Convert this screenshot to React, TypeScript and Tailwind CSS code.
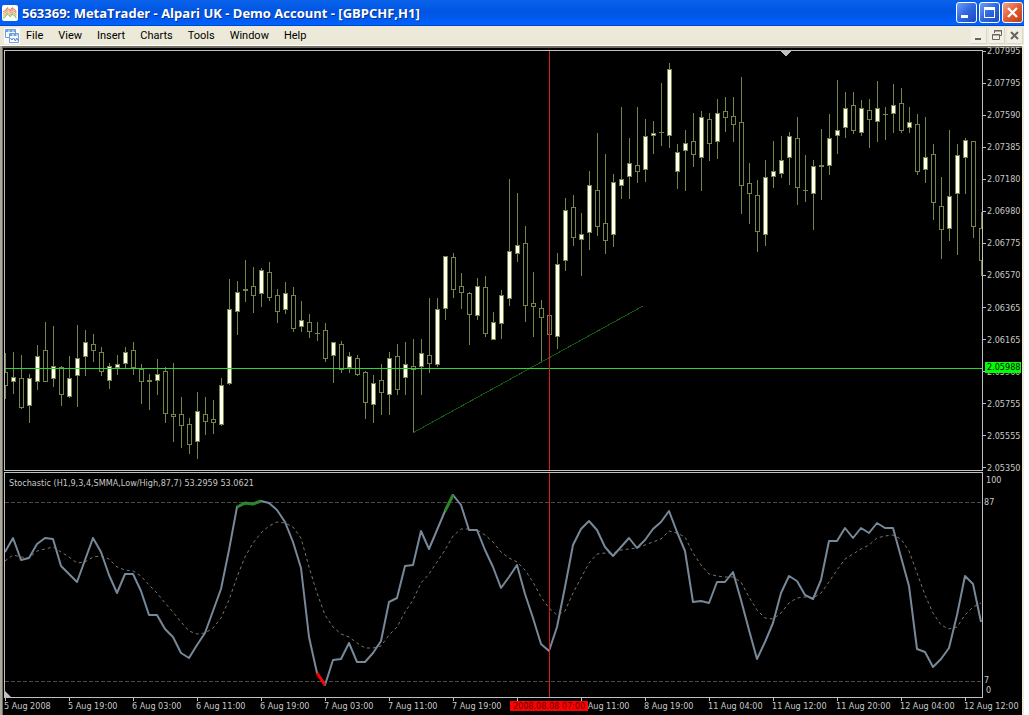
import React, { memo } from 'react';

// [high, low, bodyTop, bodyBottom, isFilled]
type Candle = [number, number, number, number, 0 | 1];

const STEP = 8;
const FIRST_X = 5;

const candles: Candle[] = [
  [353, 398, 372, 385, 0], [352, 393, 377, 381, 1], [355, 408, 378, 407, 0], [374, 422, 378, 405, 1],
  [345, 389, 356, 381, 1], [322, 381, 350, 381, 0], [326, 386, 366, 378, 1], [366, 405, 367, 394, 0],
  [356, 397, 378, 396, 1], [325, 406, 358, 375, 1], [330, 375, 342, 356, 1], [334, 361, 344, 350, 0],
  [347, 375, 352, 371, 0], [363, 388, 366, 380, 1], [355, 374, 364, 367, 1], [347, 367, 352, 363, 1],
  [342, 374, 350, 367, 0], [364, 403, 369, 381, 0], [374, 409, 380, 381, 0], [359, 394, 374, 380, 1],
  [367, 422, 371, 413, 0], [363, 441, 414, 416, 0], [397, 447, 414, 425, 0], [418, 453, 424, 444, 0],
  [392, 458, 411, 441, 1], [397, 434, 414, 421, 0], [400, 433, 419, 422, 0], [378, 425, 385, 424, 1],
  [279, 384, 309, 383, 1], [281, 334, 292, 311, 1], [260, 301, 289, 290, 0], [267, 312, 286, 295, 0],
  [268, 306, 270, 293, 1], [262, 300, 272, 297, 0], [289, 322, 295, 311, 0], [282, 313, 293, 309, 1],
  [287, 331, 295, 328, 0], [301, 331, 320, 326, 1], [314, 337, 322, 331, 0], [322, 340, 333, 333, 0],
  [323, 361, 330, 358, 0], [342, 382, 342, 355, 1], [341, 372, 344, 369, 0], [352, 372, 356, 367, 1],
  [355, 375, 358, 374, 0], [371, 418, 372, 402, 0], [375, 422, 383, 404, 1], [364, 414, 380, 392, 0],
  [352, 414, 358, 394, 1], [344, 394, 356, 389, 0], [342, 394, 364, 377, 1], [339, 432, 366, 369, 0],
  [339, 394, 353, 366, 1], [298, 372, 355, 363, 0], [298, 366, 309, 364, 1], [256, 319, 256, 308, 1],
  [253, 297, 257, 289, 0], [273, 308, 286, 292, 0], [292, 344, 293, 314, 0], [278, 319, 286, 315, 1],
  [276, 336, 287, 333, 0], [312, 339, 322, 339, 1], [290, 338, 295, 323, 1], [179, 305, 251, 298, 1],
  [193, 261, 245, 253, 1], [226, 321, 243, 305, 0], [272, 336, 303, 306, 0], [300, 361, 308, 317, 0],
  [315, 334, 315, 334, 0], [253, 348, 264, 336, 1], [198, 270, 210, 260, 1], [195, 245, 207, 237, 0],
  [213, 275, 234, 239, 1], [171, 249, 185, 232, 1], [133, 235, 190, 226, 0], [154, 253, 223, 240, 0],
  [174, 246, 182, 234, 1], [107, 198, 179, 185, 1], [138, 198, 163, 176, 1], [107, 182, 165, 171, 0],
  [119, 181, 136, 169, 1], [121, 153, 133, 135, 1], [83, 145, 132, 132, 0], [63, 147, 69, 135, 1],
  [144, 188, 152, 171, 1], [130, 190, 143, 150, 1], [113, 166, 141, 154, 0], [111, 190, 117, 157, 1],
  [113, 160, 119, 143, 0], [99, 158, 113, 141, 1], [97, 131, 111, 117, 0], [97, 141, 116, 124, 0],
  [77, 213, 122, 185, 0], [163, 223, 183, 193, 0], [180, 251, 195, 231, 0], [160, 245, 177, 234, 1],
  [141, 187, 171, 176, 1], [136, 177, 160, 173, 1], [132, 184, 136, 157, 1], [117, 204, 138, 187, 0],
  [155, 201, 190, 190, 0], [160, 229, 166, 193, 1], [129, 199, 165, 166, 0], [114, 174, 138, 165, 1],
  [80, 153, 130, 135, 1], [92, 137, 108, 127, 1], [92, 133, 105, 130, 0], [100, 135, 108, 132, 1],
  [99, 147, 110, 119, 0], [81, 141, 108, 121, 1], [107, 139, 114, 114, 0], [84, 132, 105, 113, 1],
  [88, 132, 103, 130, 0], [107, 132, 122, 127, 1], [114, 174, 124, 171, 0], [117, 182, 157, 169, 1],
  [144, 219, 154, 202, 0], [177, 258, 206, 229, 0], [130, 240, 196, 228, 1], [144, 254, 155, 193, 1],
  [138, 193, 140, 157, 1], [141, 237, 141, 226, 0], [212, 275, 228, 260, 0],
];

const stochastic = [
  552, 538, 560, 558, 544, 538, 539, 566, 574, 582, 560, 538, 552, 575, 593, 574, 574, 591, 615, 615,
  629, 637, 653, 658, 645, 633, 611, 589, 550, 507, 503, 504, 501, 503, 510, 522, 542, 568, 637, 673,
  685, 660, 659, 643, 662, 662, 653, 641, 602, 598, 566, 565, 531, 549, 530, 511, 495, 505, 530, 530,
  550, 567, 588, 577, 565, 594, 618, 644, 651, 627, 587, 545, 529, 521, 530, 547, 556, 547, 538, 548,
  540, 529, 522, 511, 532, 551, 602, 601, 603, 582, 582, 572, 600, 630, 659, 642, 623, 593, 576, 581,
  595, 599, 580, 541, 541, 528, 538, 528, 533, 523, 528, 528, 557, 586, 649, 652, 667, 659, 648, 615,
  576, 584, 622,
];

const signal = [
  561, 555, 557, 558, 551, 549, 547, 552, 557, 563, 562, 557, 556, 559, 567, 570, 571, 576, 585, 593,
  603, 612, 622, 631, 634, 633, 628, 618, 600, 577, 557, 543, 533, 526, 522, 523, 527, 538, 567, 593,
  615, 627, 634, 637, 643, 648, 648, 646, 635, 627, 612, 600, 583, 574, 562, 550, 536, 529, 529, 530,
  535, 542, 552, 558, 562, 570, 582, 597, 608, 615, 611, 593, 578, 563, 554, 553, 553, 550, 549, 548,
  545, 542, 539, 531, 533, 537, 553, 565, 574, 576, 577, 577, 582, 597, 610, 618, 619, 613, 603, 598,
  597, 598, 593, 582, 570, 559, 554, 549, 545, 538, 536, 535, 539, 551, 573, 595, 613, 625, 629, 627,
  615, 607, 603,
];

const prices = [
  '2.07995', '2.07795', '2.07590', '2.07385', '2.07180', '2.06980', '2.06775',
  '2.06570', '2.06365', '2.06165', '2.05960', '2.05755', '2.05555', '2.05350',
];

// the empty slot sits under the crosshair date
const times = [
  '5 Aug 2008', '5 Aug 19:00', '6 Aug 03:00', '6 Aug 11:00', '6 Aug 19:00', '7 Aug 03:00',
  '7 Aug 11:00', '7 Aug 19:00', '', '8 Aug 11:00', '8 Aug 19:00', '11 Aug 04:00',
  '11 Aug 12:00', '11 Aug 20:00', '12 Aug 04:00', '12 Aug 12:00',
];

const menus = ['File', 'View', 'Insert', 'Charts', 'Tools', 'Window', 'Help'];

const toPoints = (values: number[], from = 0, to = values.length - 1) =>
  values
    .slice(from, to + 1)
    .map((y, i) => `${FIRST_X + (from + i) * STEP},${y}`)
    .join(' ');

const TitleBar: React.FC = () => (
  <header className="flex h-[26px] items-center gap-[2px] bg-linear-to-b from-[#0a62ea] via-[#0054e3] to-[#0062ff] border-b border-[#0046c8] pl-[2px] pr-px">
    <svg width="16" height="16" viewBox="0 0 16 16" aria-hidden="true">
      <rect width="16" height="16" rx="2" fill="#fdfdf8" />
      <g fill="none" strokeWidth="1.200" strokeDasharray="1.200 .6">
        <path d="M1.500 7 5.500 3l2.500 2.500L10.500 3l4 4" stroke="#d8583c" />
        <path d="M1.500 9 5.500 5l2.500 2.500L10.500 5l4 4" stroke="#e08a50" />
        <path d="M1.500 11 5.500 7l2.500 2.500L10.500 7l4 4" stroke="#d0a850" />
        <path d="M1.500 13 5.500 9l2.500 2.500L10.500 9l4 4" stroke="#7ba35c" />
      </g>
    </svg>
    <h1 className="ml-[2px] flex-1 whitespace-nowrap font-['Open_Sans',sans-serif] text-[13px] font-bold leading-[24px] text-white [text-shadow:1px_1px_0_#0a2f8c]">
      563369: MetaTrader - Alpari UK - Demo Account - [GBPCHF,H1]
    </h1>
    <button aria-label="Minimize" className="h-[21px] w-[21px] rounded-[3px] border border-white bg-linear-to-br from-[#6f9cf5] via-[#2f66e0] to-[#1c49c0]">
      <svg width="19" height="19" viewBox="0 0 19 19"><path d="M4 12h7v3H4z" fill="#fff" /></svg>
    </button>
    <button aria-label="Maximize" className="h-[21px] w-[21px] rounded-[3px] border border-white bg-linear-to-br from-[#6f9cf5] via-[#2f66e0] to-[#1c49c0]">
      <svg width="19" height="19" viewBox="0 0 19 19"><path d="M4 4h11v11H4zM5 7v7h9V7z" fill="#fff" fillRule="evenodd" /></svg>
    </button>
    <button aria-label="Close" className="h-[21px] w-[21px] rounded-[3px] border border-white bg-linear-to-br from-[#f0a088] via-[#e35a30] to-[#c03c10]">
      <svg width="19" height="19" viewBox="0 0 19 19"><path d="m5 5 9 9m0-9-9 9" stroke="#fff" strokeWidth="2.300" /></svg>
    </button>
  </header>
);

const MenuBar: React.FC = () => (
  <nav className="flex h-[20px] items-center border-b border-white bg-[#ece9d8] pl-[4px] pr-px">
    <svg width="16" height="16" viewBox="-1 -1 16 16" fill="none" stroke="#6f9fdc" aria-hidden="true">
      <path d="M-1-1h16v16H-1z" fill="#fafafa" stroke="none" />
      <path d="M.5.500h10v8H.500z" fill="#f4f8ff" />
      <path d="M.5 2h10" strokeWidth="2" strokeDasharray="3 1" />
      <path d="M4.500 4.500h9v9h-9z" fill="#fff" />
      <path d="M4.500 6h9" strokeWidth="2" strokeDasharray="3 1" />
      <path d="m5.500 9 1.500 2 1.500-2 2 3 1-3 2 3" stroke="#4d83cc" />
    </svg>
    <ul className="ml-[6px] flex flex-1 gap-[15px] pt-px font-['Roboto',sans-serif] text-[11px] leading-[18px] text-black">
      {menus.map(menu => (
        <li key={menu}>
          <button className="block">{menu}</button>
        </li>
      ))}
    </ul>
    <div className="flex gap-[2px]">
      <button aria-label="Minimize chart" className="h-4 w-4 border-b border-r border-[#dcd8c4] bg-[#f2f0e6]">
        <svg width="15" height="15" viewBox="0 0 15 15"><path d="M4 10h6v2H4z" fill="#68665c" /></svg>
      </button>
      <button aria-label="Restore chart" className="h-4 w-4 border-b border-r border-[#dcd8c4] bg-[#f2f0e6]">
        <svg width="15" height="15" viewBox="0 0 15 15" fill="none" stroke="#68665c">
          <path d="M5.500 5V2.500h7v5H11M5 3h8M3.500 6.500h7v5h-7zM3 7h8" />
        </svg>
      </button>
      <button aria-label="Close chart" className="h-4 w-4 border-b border-r border-[#dcd8c4] bg-[#f2f0e6]">
        <svg width="15" height="15" viewBox="0 0 15 15"><path d="m4 4 7 7m0-7-7 7" stroke="#68665c" strokeWidth="2" /></svg>
      </button>
    </div>
  </nav>
);

const PriceChart: React.FC = memo(() => (
  <svg
    className="block h-[419px] w-full"
    viewBox="5 51 977 419"
    preserveAspectRatio="none"
    shapeRendering="crispEdges"
  >
    {candles.map(([high, low, top, bottom, filled], i) => {
      const x = FIRST_X + i * STEP;
      return (
        <g key={x} fill="#74854a">
          <rect x={x} y={high} width="1" height={low - high + 1} />
          <rect x={x - 2} y={top} width="5" height={bottom - top + 1} />
          {bottom - top > 1 && (
            <rect x={x - 1} y={top + 1} width="3" height={bottom - top - 1} fill={filled ? '#fffff0' : '#000'} />
          )}
        </g>
      );
    })}
    <path d="M413.500 432.500 643 306" stroke="#145c14" />
    <path d="M5 368.500h977" stroke="#2fd62f" />
    <rect x="549" y="51" width="1" height="419" fill="#d81c1c" />
    <path d="M780 51h11l-5.500 5.500z" fill="#c0c0c0" />
  </svg>
));

const StochasticChart: React.FC = memo(() => (
  <svg className="block h-[224px] w-full" viewBox="5 473 977 224" preserveAspectRatio="none" fill="none">
    <g stroke="#4c4c4c" strokeDasharray="4 2" shapeRendering="crispEdges">
      <path d="M5 502.500h977" />
      <path d="M5 681.500h977" />
    </g>
    <polyline points={toPoints(signal)} stroke="#77776e" strokeDasharray="3 3" />
    <polyline points={toPoints(stochastic)} stroke="#778899" strokeWidth="2" strokeLinejoin="round" />
    <g strokeWidth="3" strokeLinejoin="round">
      <polyline points={toPoints(stochastic, 29, 32)} stroke="#2b862b" />
      <polyline points={toPoints(stochastic, 55, 56)} stroke="#2b862b" />
      <polyline points={toPoints(stochastic, 39, 40)} stroke="#ff0000" />
    </g>
    <rect x="549" y="473" width="1" height="224" fill="#d81c1c" shapeRendering="crispEdges" />
    <path d="M5 691v6h6z" fill="#c0c0c0" />
  </svg>
));

const App: React.FC = () => (
  <div className="min-h-screen bg-white pr-[5px]">
    <TitleBar />
    <MenuBar />
    <main className="border-l-2 border-r-2 border-l-[#aca899] border-r-[#ece9d8]">
      <div className="flex min-h-[669px] flex-col border-l border-t-2 border-[#716f64] bg-black pl-px pt-[2px] font-['DejaVu_Sans_Condensed','DejaVu_Sans',sans-serif] text-[9px] leading-[10px] text-[#c8c8c8]">
        <section className="flex">
          <div className="min-w-0 flex-1 border border-[#c0c0c0]">
            <PriceChart />
          </div>
          <div className="relative -mb-[2px] -mt-1 w-[39px] shrink-0">
            <ul className="flex h-full flex-col justify-between">
              {prices.map(price => (
                <li key={price} className="flex items-center gap-px">
                  <span className="h-px w-[3px] bg-[#c0c0c0]" />
                  {price}
                </li>
              ))}
            </ul>
            <span className="absolute left-[2px] top-[316px] bg-[#00ff00] pl-[2px] pr-px leading-[11px] text-black">
              2.05988
            </span>
          </div>
        </section>
        <section className="mt-px flex">
          <div className="relative min-w-0 flex-1 border border-[#c0c0c0]">
            <h2 className="absolute left-[4px] top-[5px] whitespace-nowrap">
              Stochastic (H1,9,3,4,SMMA,Low/High,87,7) 53.2959 53.0621
            </h2>
            <StochasticChart />
          </div>
          <div className="flex w-[39px] shrink-0 flex-col justify-between py-[3px] pl-px">
            <div className="flex flex-col gap-3">
              <span className="pl-[2px]">100</span>
              <span>87</span>
            </div>
            <div className="flex flex-col">
              <span>7</span>
              <span className="pl-[2px]">0</span>
            </div>
          </div>
        </section>
        <div className="relative">
          <ul className="flex overflow-hidden whitespace-nowrap">
            {times.map((time, i) => (
              <li key={i} className="w-16 shrink-0">
                <span className="ml-px block h-[3px] w-px bg-[#c0c0c0]" />
                {time}
              </li>
            ))}
          </ul>
          <time
            dateTime="2008-08-08T07:00"
            className="absolute left-[506px] top-[3px] w-[78px] whitespace-nowrap bg-[#ff0000] text-center text-[#5c0000]"
          >
            2008.08.08 07:00
          </time>
        </div>
      </div>
    </main>
  </div>
);

export default App;
